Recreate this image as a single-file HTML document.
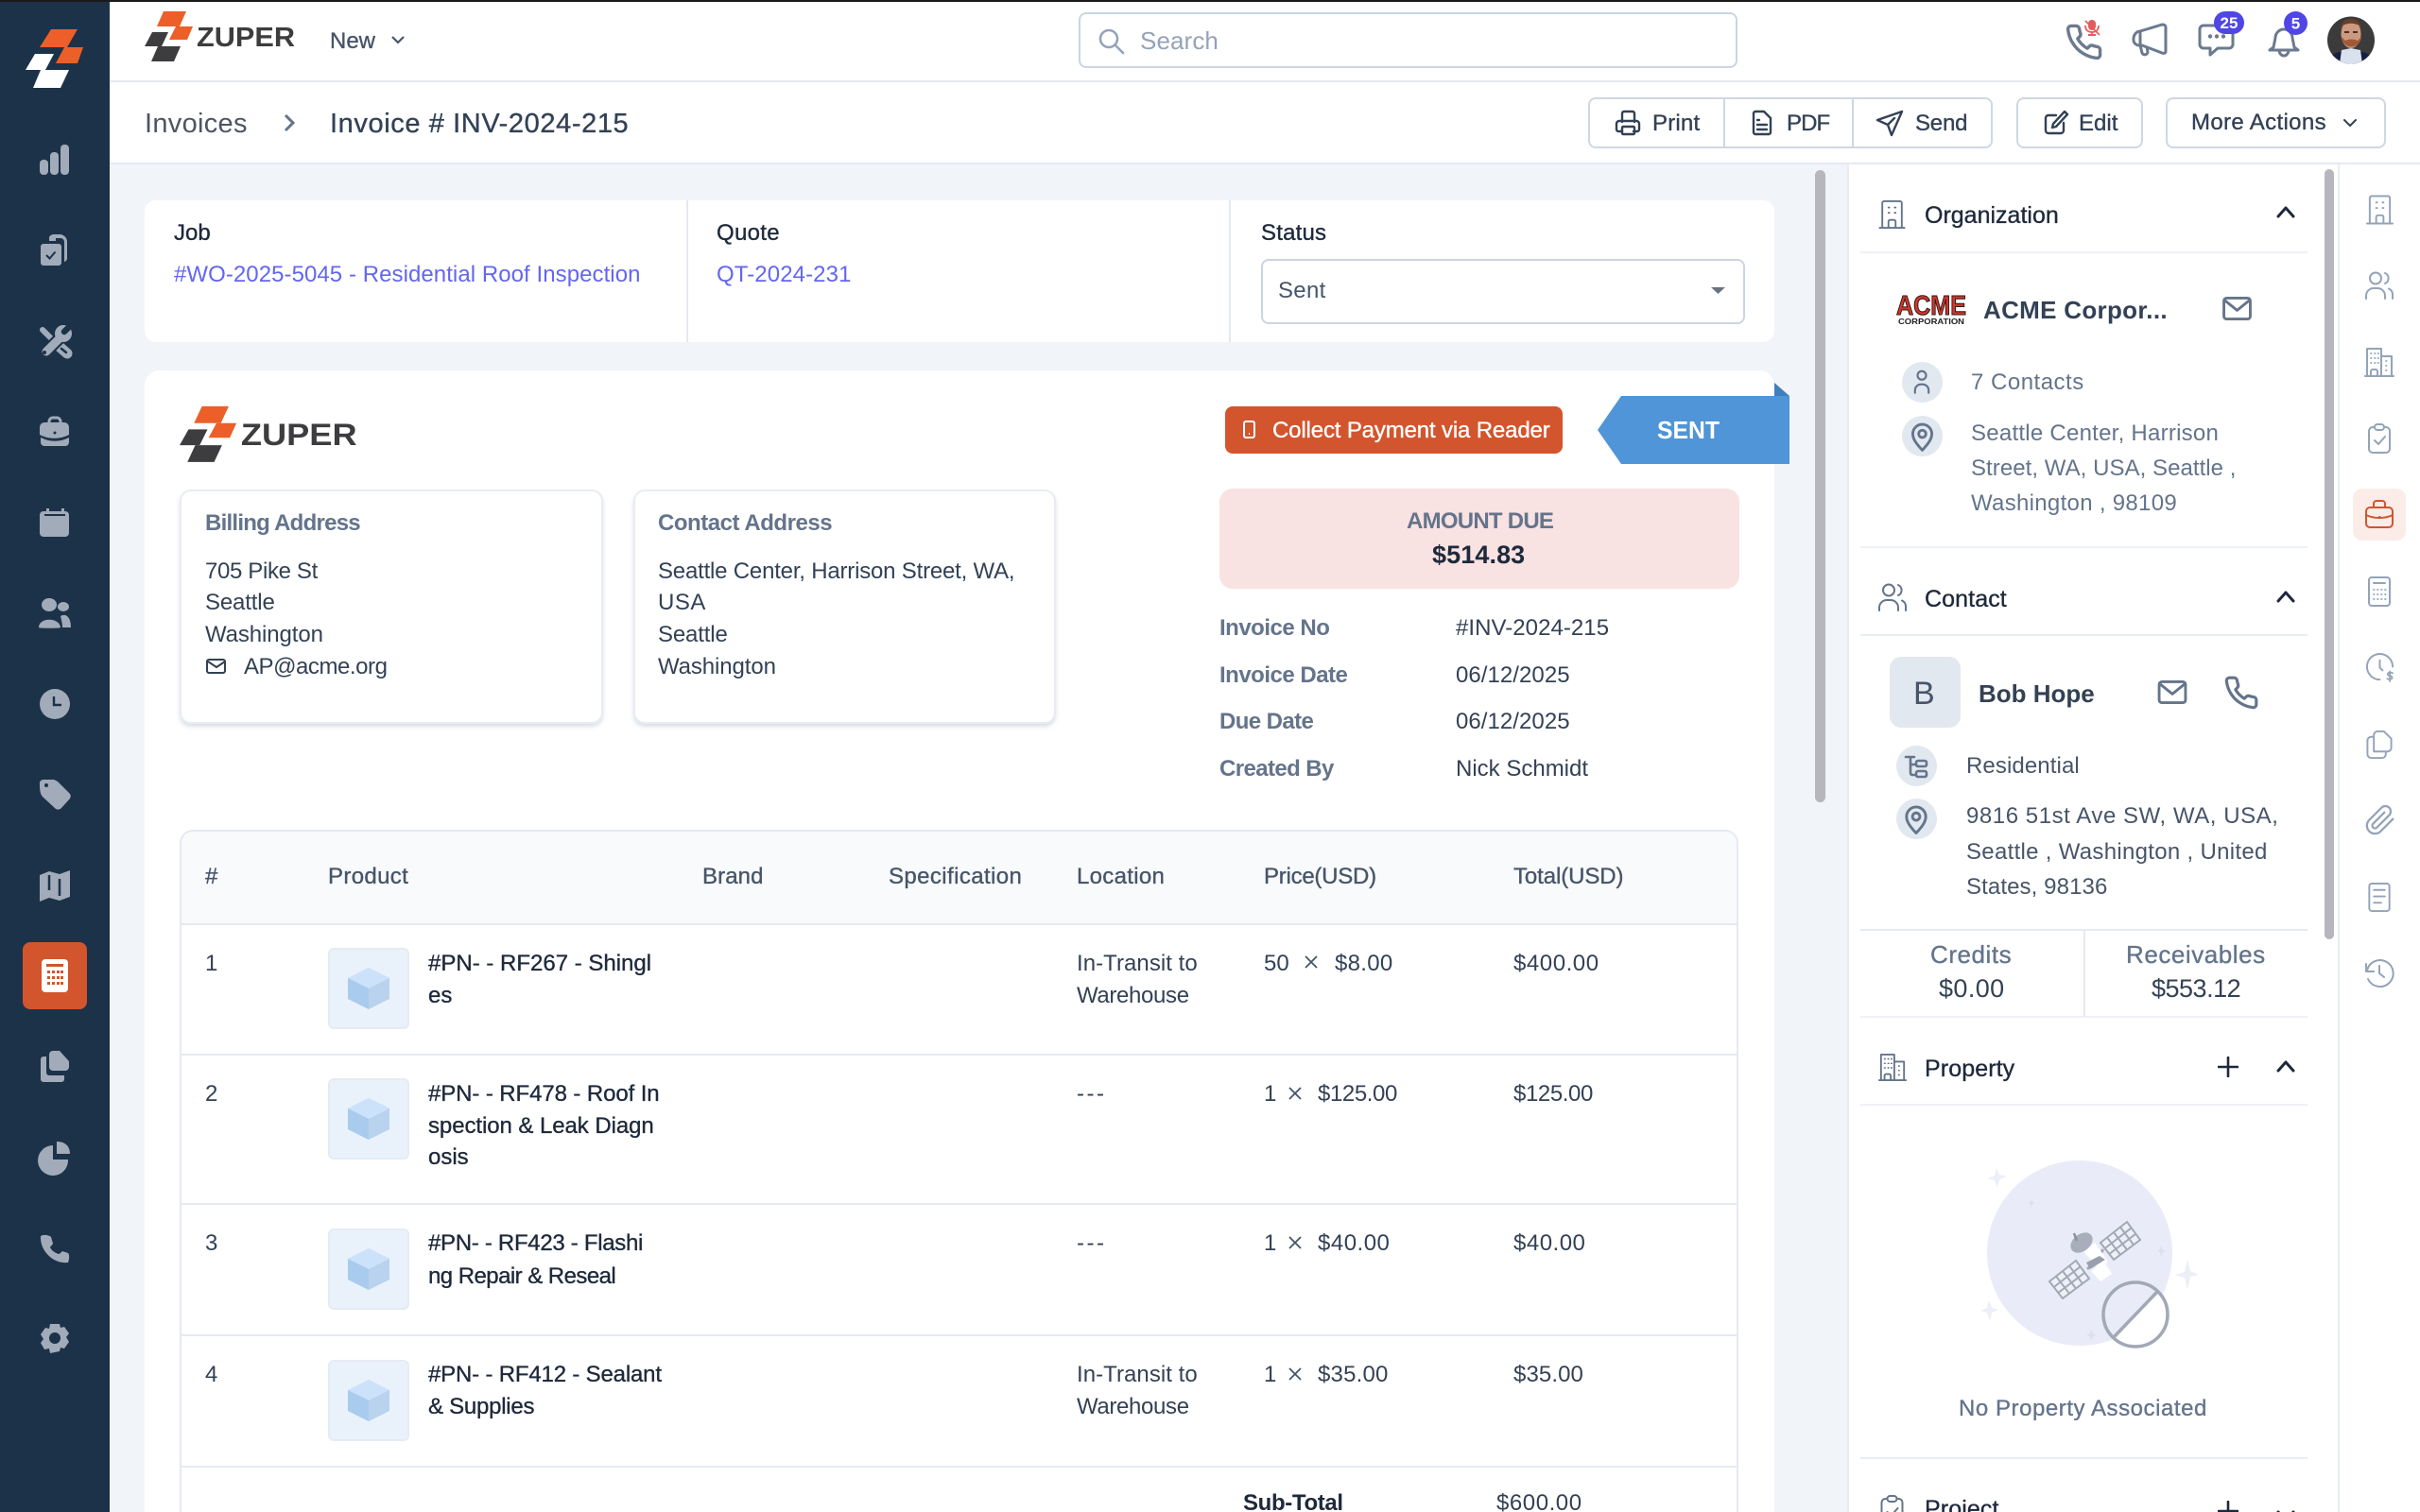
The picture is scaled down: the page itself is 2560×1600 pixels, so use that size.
<!DOCTYPE html>
<html lang="en"><head><meta charset="utf-8"><title>Invoice</title>
<style>
*{box-sizing:border-box}
html,body{margin:0;padding:0;width:2560px;height:1600px;overflow:hidden;background:#f1f4f9;font-family:"Liberation Sans",sans-serif}
#p{position:relative;width:2560px;height:1600px;overflow:hidden;background:#f1f4f9}
.r{position:absolute}
.t{position:absolute;white-space:nowrap;font-size:24px;line-height:34px;height:34px;margin-top:1px;color:#334155;letter-spacing:0}
.m{-webkit-text-stroke:.35px currentColor}
.b{font-weight:700;letter-spacing:-.5px}
.g{color:#64748b}
.d{color:#1e293b}
.l{color:#6366f1}
svg.o{position:absolute;left:0;top:0;z-index:5}
.th{position:absolute;left:347px;width:86px;height:86px;background:#e9f2fb;border:2px solid #e6ebf2;border-radius:6px}
</style></head><body><div id="p">
<div class="r" style="left:0;top:0;width:2560px;height:2px;background:#1a1a1a;z-index:9"></div>
<div class="r" style="left:0;top:0;width:116px;height:1600px;background:#1c3249"></div>
<div class="r" style="left:116px;top:2px;width:2444px;height:171px;background:#fff"></div>
<div class="r" style="left:116px;top:85px;width:2444px;height:2px;background:#e5eaf1"></div>
<div class="r" style="left:116px;top:172px;width:2444px;height:2px;background:#e5eaf1"></div>
<div class="r" style="left:1141px;top:13px;width:697px;height:59px;border:2px solid #cbd5e1;border-radius:8px;background:#fff"></div>
<div class="r" style="left:1680px;top:103px;width:428px;height:54px;border:2px solid #cfd7e2;border-radius:8px"></div>
<div class="r" style="left:1823px;top:103px;width:2px;height:54px;background:#cfd7e2"></div>
<div class="r" style="left:1959px;top:103px;width:2px;height:54px;background:#cfd7e2"></div>
<div class="r" style="left:2133px;top:103px;width:134px;height:54px;border:2px solid #cfd7e2;border-radius:8px"></div>
<div class="r" style="left:2291px;top:103px;width:233px;height:54px;border:2px solid #cfd7e2;border-radius:8px"></div>

<div class="r" style="left:153px;top:212px;width:1724px;height:150px;background:#fff;border-radius:12px"></div>
<div class="r" style="left:726px;top:212px;width:2px;height:150px;background:#e5eaf1"></div>
<div class="r" style="left:1300px;top:212px;width:2px;height:150px;background:#e5eaf1"></div>
<div class="r" style="left:1334px;top:274px;width:512px;height:69px;border:2px solid #cbd5e1;border-radius:8px"></div>

<div class="r" style="left:153px;top:392px;width:1724px;height:1208px;background:#fff;border-radius:16px 16px 0 0"></div>
<div class="r" style="left:1296px;top:430px;width:357px;height:50px;background:#d2552e;border-radius:8px"></div>
<div class="r" style="left:1290px;top:517px;width:550px;height:106px;background:#f8e2e2;border-radius:14px"></div>
<div class="r" style="left:190px;top:518px;width:448px;height:248px;border:2px solid #e8ecf2;border-radius:12px;box-shadow:0 3px 4px rgba(148,163,184,.35)"></div>
<div class="r" style="left:670px;top:518px;width:447px;height:248px;border:2px solid #e8ecf2;border-radius:12px;box-shadow:0 3px 4px rgba(148,163,184,.35)"></div>

<div class="r" style="left:190px;top:878px;width:1649px;height:722px;border:2px solid #e5eaf1;border-bottom:0;border-radius:14px 14px 0 0"></div>
<div class="r" style="left:192px;top:880px;width:1645px;height:97px;background:#f8fafc;border-radius:12px 12px 0 0"></div>
<div class="r" style="left:190px;top:977px;width:1649px;height:2px;background:#e5eaf1"></div>
<div class="r" style="left:190px;top:1115px;width:1649px;height:2px;background:#e5eaf1"></div>
<div class="r" style="left:190px;top:1273px;width:1649px;height:2px;background:#e5eaf1"></div>
<div class="r" style="left:190px;top:1412px;width:1649px;height:2px;background:#e5eaf1"></div>
<div class="r" style="left:190px;top:1551px;width:1649px;height:2px;background:#e5eaf1"></div>
<div class="th" style="top:1003px"></div>
<div class="th" style="top:1141px"></div>
<div class="th" style="top:1300px"></div>
<div class="th" style="top:1439px"></div>

<div class="r" style="left:1920px;top:180px;width:11px;height:669px;background:#b6b6bc;border-radius:6px"></div>

<div class="r" style="left:1954px;top:174px;width:606px;height:1426px;background:#fff"></div>
<div class="r" style="left:1954px;top:174px;width:2px;height:1426px;background:#e8ecf3"></div>
<div class="r" style="left:2473px;top:174px;width:2px;height:1426px;background:#e8ecf3"></div>
<div class="r" style="left:2459px;top:179px;width:10px;height:815px;background:#b6b6bc;border-radius:5px"></div>
<div class="r" style="left:1968px;top:266px;width:473px;height:2px;background:#eef1f6"></div>
<div class="r" style="left:1968px;top:578px;width:473px;height:2px;background:#eef1f6"></div>
<div class="r" style="left:1968px;top:671px;width:473px;height:2px;background:#e8ecf3"></div>
<div class="r" style="left:1968px;top:983px;width:473px;height:2px;background:#e5eaf1"></div>
<div class="r" style="left:1968px;top:1075px;width:473px;height:2px;background:#eef1f6"></div>
<div class="r" style="left:2204px;top:984px;width:2px;height:92px;background:#e5eaf1"></div>
<div class="r" style="left:1968px;top:1168px;width:473px;height:2px;background:#eef1f6"></div>
<div class="r" style="left:1968px;top:1542px;width:473px;height:2px;background:#e8ecf3"></div>
<div class="r" style="left:1999px;top:695px;width:75px;height:75px;background:#e2e8f0;border-radius:12px"></div>
<div class="r" style="left:2012px;top:383px;width:43px;height:43px;background:#e2e8f0;border-radius:50%"></div>
<div class="r" style="left:2012px;top:440px;width:43px;height:43px;background:#e2e8f0;border-radius:50%"></div>
<div class="r" style="left:2006px;top:789px;width:43px;height:43px;background:#e2e8f0;border-radius:50%"></div>
<div class="r" style="left:2006px;top:845px;width:43px;height:43px;background:#e2e8f0;border-radius:50%"></div>
<div class="r" style="left:2489px;top:517px;width:56px;height:55px;background:#fbece8;border-radius:10px"></div>

<!-- top bar text -->
<div class="t m" style="left:349px;top:26px;color:#475569">New</div>
<div class="t" style="left:1206px;top:25px;font-size:26px;color:#94a3b8;letter-spacing:.1px">Search</div>
<div class="t" style="left:153px;top:113px;font-size:29px;color:#4b5563;letter-spacing:.3px">Invoices</div>
<div class="t m" style="left:349px;top:113px;font-size:29px;color:#334155;letter-spacing:.6px">Invoice # INV-2024-215</div>
<div class="t m" style="left:1748px;top:113px;letter-spacing:.2px">Print</div>
<div class="t m" style="left:1890px;top:113px;letter-spacing:-.9px">PDF</div>
<div class="t m" style="left:2026px;top:113px;letter-spacing:-.2px">Send</div>
<div class="t m" style="left:2199px;top:113px">Edit</div>
<div class="t m" style="left:2318px;top:112px;letter-spacing:.35px">More Actions</div>

<!-- job card -->
<div class="t m d" style="left:184px;top:229px">Job</div>
<div class="t l" style="left:184px;top:273px;letter-spacing:.06px">#WO-2025-5045 - Residential Roof Inspection</div>
<div class="t m d" style="left:758px;top:229px;letter-spacing:.3px">Quote</div>
<div class="t l" style="left:758px;top:273px;letter-spacing:.1px">QT-2024-231</div>
<div class="t m d" style="left:1334px;top:229px;letter-spacing:.2px">Status</div>
<div class="t" style="left:1352px;top:290px;color:#475569;letter-spacing:.3px">Sent</div>

<!-- invoice head -->
<div class="t m" style="left:1346px;top:438px;color:#fff;letter-spacing:-.15px">Collect Payment via Reader</div>
<div class="t b" style="left:1753px;top:438px;color:transparent;font-size:26px;width:0;overflow:hidden"></div>
<div class="t b g" style="left:1488px;top:534px;letter-spacing:-.75px">AMOUNT DUE</div>
<div class="t b d" style="left:1515px;top:569px;font-size:27px;letter-spacing:.1px">$514.83</div>
<div class="t b g" style="left:1290px;top:647px">Invoice No</div>
<div class="t" style="left:1540px;top:647px;letter-spacing:.05px">#INV-2024-215</div>
<div class="t b g" style="left:1290px;top:697px">Invoice Date</div>
<div class="t" style="left:1540px;top:697px;letter-spacing:.05px">06/12/2025</div>
<div class="t b g" style="left:1290px;top:746px;letter-spacing:-.6px">Due Date</div>
<div class="t" style="left:1540px;top:746px;letter-spacing:.05px">06/12/2025</div>
<div class="t b g" style="left:1290px;top:796px;letter-spacing:-.6px">Created By</div>
<div class="t" style="left:1540px;top:796px">Nick Schmidt</div>

<!-- addresses -->
<div class="t b g" style="left:217px;top:536px;letter-spacing:-.75px">Billing Address</div>
<div class="t" style="left:217px;top:587px;letter-spacing:-.35px">705 Pike St</div>
<div class="t" style="left:217px;top:620px;letter-spacing:-.15px">Seattle</div>
<div class="t" style="left:217px;top:654px;letter-spacing:-.1px">Washington</div>
<div class="t" style="left:258px;top:688px;letter-spacing:-.45px">AP@acme.org</div>
<div class="t b g" style="left:696px;top:536px;letter-spacing:-.47px">Contact Address</div>
<div class="t" style="left:696px;top:587px;letter-spacing:-.2px">Seattle Center, Harrison Street, WA,</div>
<div class="t" style="left:696px;top:620px;letter-spacing:.5px">USA</div>
<div class="t" style="left:696px;top:654px;letter-spacing:-.15px">Seattle</div>
<div class="t" style="left:696px;top:688px;letter-spacing:-.1px">Washington</div>

<!-- table head -->
<div class="t m" style="left:217px;top:910px;color:#475569">#</div>
<div class="t m" style="left:347px;top:910px;color:#475569;letter-spacing:.35px">Product</div>
<div class="t m" style="left:743px;top:910px;color:#475569;letter-spacing:.1px">Brand</div>
<div class="t m" style="left:940px;top:910px;color:#475569;letter-spacing:.4px">Specification</div>
<div class="t m" style="left:1139px;top:910px;color:#475569;letter-spacing:.3px">Location</div>
<div class="t m" style="left:1337px;top:910px;color:#475569;letter-spacing:-.25px">Price(USD)</div>
<div class="t m" style="left:1601px;top:910px;color:#475569;letter-spacing:-.1px">Total(USD)</div>

<!-- row 1 -->
<div class="t" style="left:217px;top:1002px">1</div>
<div class="t m d" style="left:453px;top:1002px">#PN- - RF267 - Shingl</div>
<div class="t m d" style="left:453px;top:1036px">es</div>
<div class="t" style="left:1139px;top:1002px;letter-spacing:.05px">In-Transit to</div>
<div class="t" style="left:1139px;top:1036px;letter-spacing:-.35px">Warehouse</div>
<div class="t" style="left:1337px;top:1002px">50</div>
<div class="t" style="left:1412px;top:1002px;letter-spacing:.3px">$8.00</div>
<div class="t" style="left:1601px;top:1002px;letter-spacing:.55px">$400.00</div>
<!-- row 2 -->
<div class="t" style="left:217px;top:1140px">2</div>
<div class="t m d" style="left:453px;top:1140px;letter-spacing:-.1px">#PN- - RF478 - Roof In</div>
<div class="t m d" style="left:453px;top:1174px;letter-spacing:-.07px">spection &amp; Leak Diagn</div>
<div class="t m d" style="left:453px;top:1207px">osis</div>
<div class="t" style="left:1139px;top:1140px;letter-spacing:2.500px">---</div>
<div class="t" style="left:1337px;top:1140px">1</div>
<div class="t" style="left:1394px;top:1140px;letter-spacing:-.4px">$125.00</div>
<div class="t" style="left:1601px;top:1140px;letter-spacing:-.4px">$125.00</div>
<!-- row 3 -->
<div class="t" style="left:217px;top:1298px">3</div>
<div class="t m d" style="left:453px;top:1298px;letter-spacing:-.3px">#PN- - RF423 - Flashi</div>
<div class="t m d" style="left:453px;top:1333px;letter-spacing:-.55px">ng Repair &amp; Reseal</div>
<div class="t" style="left:1139px;top:1298px;letter-spacing:2.500px">---</div>
<div class="t" style="left:1337px;top:1298px">1</div>
<div class="t" style="left:1394px;top:1298px;letter-spacing:.5px">$40.00</div>
<div class="t" style="left:1601px;top:1298px;letter-spacing:.5px">$40.00</div>
<!-- row 4 -->
<div class="t" style="left:217px;top:1437px">4</div>
<div class="t m d" style="left:453px;top:1437px;letter-spacing:-.18px">#PN- - RF412 - Sealant</div>
<div class="t m d" style="left:453px;top:1471px;letter-spacing:-.25px">&amp; Supplies</div>
<div class="t" style="left:1139px;top:1437px;letter-spacing:.05px">In-Transit to</div>
<div class="t" style="left:1139px;top:1471px;letter-spacing:-.35px">Warehouse</div>
<div class="t" style="left:1337px;top:1437px">1</div>
<div class="t" style="left:1394px;top:1437px;letter-spacing:.2px">$35.00</div>
<div class="t" style="left:1601px;top:1437px;letter-spacing:.1px">$35.00</div>
<div class="t b d" style="left:1315px;top:1573px;letter-spacing:-.35px">Sub-Total</div>
<div class="t" style="left:1583px;top:1573px;letter-spacing:.55px">$600.00</div>

<!-- right panel text -->
<div class="t m d" style="left:2036px;top:210px;font-size:25px">Organization</div>
<div class="t b" style="left:2098px;top:310px;font-size:26px;letter-spacing:.3px">ACME Corpor...</div>
<div class="t g" style="left:2085px;top:387px;letter-spacing:.5px">7 Contacts</div>
<div class="t g" style="left:2085px;top:441px;letter-spacing:.25px">Seattle Center, Harrison</div>
<div class="t g" style="left:2085px;top:478px;letter-spacing:.05px">Street, WA, USA, Seattle ,</div>
<div class="t g" style="left:2085px;top:515px;letter-spacing:.3px">Washington , 98109</div>
<div class="t m d" style="left:2036px;top:616px;font-size:25px;letter-spacing:.1px">Contact</div>
<div class="t" style="left:2024px;top:716px;font-size:34px;color:#475569">B</div>
<div class="t b" style="left:2093px;top:716px;font-size:26px;letter-spacing:0">Bob Hope</div>
<div class="t" style="left:2080px;top:793px;color:#475569;letter-spacing:.1px">Residential</div>
<div class="t" style="left:2080px;top:846px;color:#475569;letter-spacing:.55px">9816 51st Ave SW, WA, USA,</div>
<div class="t" style="left:2080px;top:884px;color:#475569;letter-spacing:.3px">Seattle , Washington , United</div>
<div class="t" style="left:2080px;top:921px;color:#475569;letter-spacing:.1px">States, 98136</div>
<div class="t m g" style="left:2042px;top:992px;font-size:26px;letter-spacing:.55px">Credits</div>
<div class="t" style="left:2051px;top:1028px;font-size:27px;letter-spacing:.4px">$0.00</div>
<div class="t m g" style="left:2249px;top:992px;font-size:26px;letter-spacing:.55px">Receivables</div>
<div class="t" style="left:2276px;top:1028px;font-size:27px;letter-spacing:-.5px">$553.12</div>
<div class="t m d" style="left:2036px;top:1113px;font-size:25px;letter-spacing:.1px">Property</div>
<div class="t m g" style="left:2072px;top:1473px;letter-spacing:.55px">No Property Associated</div>
<div class="t m d" style="left:2036px;top:1579px;font-size:25px;letter-spacing:.1px">Project</div>

<svg class="o" width="2560" height="1600" viewBox="0 0 2560 1600" xmlns="http://www.w3.org/2000/svg" font-family="Liberation Sans, sans-serif">
<defs>
<symbol id="bld" viewBox="0 0 30 32"><g fill="none" stroke="currentColor" stroke-width="2" stroke-linecap="round" stroke-linejoin="round"><path d="M1 31h28M4 31V3a2 2 0 0 1 2-2h18a2 2 0 0 1 2 2v28M11 31v-7a2 2 0 0 1 2-2h4a2 2 0 0 1 2 2v7M11 8h1M18 8h1M11 14h1M18 14h1"/></g></symbol>
<symbol id="users" viewBox="0 0 30 30"><g fill="none" stroke="currentColor" stroke-width="2" stroke-linecap="round"><circle cx="11" cy="7.500" r="6"/><path d="M1 29v-3a8 8 0 0 1 8-8h4a8 8 0 0 1 8 8v3M21 2a6 6 0 0 1 0 11M25 18.500a7 7 0 0 1 4 6.500v4"/></g></symbol>
<symbol id="blds" viewBox="0 0 32 32"><g fill="none" stroke="currentColor" stroke-width="2" stroke-linecap="round" stroke-linejoin="round"><path d="M1 31h30M3 31V2h15v29M18 10h11v21M7 31v-5a2 2 0 0 1 2-2h3a2 2 0 0 1 2 2v5"/><path stroke-width="1.700" d="M7 7h.6M11 7h.6M14.500 7h.6M7 12h.6M11 12h.6M14.500 12h.6M7 17h.6M11 17h.6M14.500 17h.6M23 15h.6M23 20h.6M23 25h.6"/></g></symbol>
<symbol id="clip" viewBox="0 0 24 32"><g fill="none" stroke="currentColor" stroke-width="2" stroke-linecap="round" stroke-linejoin="round"><rect x="1" y="4" width="22" height="27" rx="4"/><rect x="7" y="1" width="10" height="6" rx="3" fill="#fff"/><path d="M7 18l4 4 7-8"/></g></symbol>
<symbol id="brief" viewBox="0 0 30 30"><g fill="none" stroke="currentColor" stroke-width="2" stroke-linecap="round" stroke-linejoin="round"><rect x="1" y="8" width="28" height="21" rx="4"/><path d="M9 8V4a3 3 0 0 1 3-3h6a3 3 0 0 1 3 3v4M1 16c8 4 20 4 28 0M15 18h.5"/></g></symbol>
<symbol id="calc" viewBox="0 0 24 32"><g fill="none" stroke="currentColor" stroke-width="2" stroke-linecap="round"><rect x="1" y="1" width="22" height="30" rx="3"/><path d="M6 7h12"/><path stroke-width="1.800" d="M6 14h.6M10 14h.6M14 14h.6M18 14h.6M6 19h.6M10 19h.6M14 19h.6M18 19h.6M6 24h.6M10 24h.6M14 24h.6M18 24h.6"/></g></symbol>
<symbol id="clkd" viewBox="0 0 30 34"><g fill="none" stroke="currentColor" stroke-width="2" stroke-linecap="round"><path d="M29 15A14 14 0 1 0 15 29M15 8v8l3 3"/><path stroke-width="1.800" d="M29 22c-1-1-4-1-5 0s0 3 2 3 3 2 2 3-4 1-5 0M26 20v11"/></g></symbol>
<symbol id="copy" viewBox="0 0 28 32"><g fill="none" stroke="currentColor" stroke-width="2" stroke-linejoin="round"><path d="M8 24V6a4 4 0 0 1 4-4h7l8 8v10a4 4 0 0 1-4 4z"/><path d="M8 8H5a4 4 0 0 0-4 4v15a4 4 0 0 0 4 4h12a4 4 0 0 0 4-4v-3"/></g></symbol>
<symbol id="pc" viewBox="0 0 24 24"><path fill="none" stroke="currentColor" stroke-width="1.600" stroke-linecap="round" stroke-linejoin="round" d="M21.440 11.050l-9.190 9.190a6 6 0 0 1-8.490-8.490l9.190-9.190a4 4 0 0 1 5.660 5.660l-9.200 9.190a2 2 0 0 1-2.830-2.830l8.490-8.480"/></symbol>
<symbol id="doc" viewBox="0 0 24 32"><g fill="none" stroke="currentColor" stroke-width="2" stroke-linecap="round"><rect x="1" y="1" width="22" height="30" rx="3"/><path d="M6 8h12M6 15h12M6 22h8"/></g></symbol>
<symbol id="hist" viewBox="0 0 32 32"><g fill="none" stroke="currentColor" stroke-width="2" stroke-linecap="round" stroke-linejoin="round"><path d="M4 22a14 14 0 1 0-1-9M2 6v8h8M16 8v8l5 4"/></g></symbol>
<symbol id="mail" viewBox="0 0 32 26"><g fill="none" stroke="#64748b" stroke-width="3" stroke-linejoin="round" stroke-linecap="round"><rect x="1.500" y="1.500" width="29" height="23" rx="3"/><path d="M2.500 4L16 15 29.500 4"/></g></symbol>
<symbol id="ph" viewBox="0 0 24 24"><path fill="none" stroke="currentColor" stroke-width="2" stroke-linecap="round" stroke-linejoin="round" d="M22 16.920v3a2 2 0 0 1-2.180 2 19.790 19.790 0 0 1-8.630-3.070 19.500 19.500 0 0 1-6-6 19.790 19.790 0 0 1-3.070-8.670A2 2 0 0 1 4.110 2h3a2 2 0 0 1 2 1.720 12.840 12.840 0 0 0 .7 2.810 2 2 0 0 1-.45 2.110L8.090 9.910a16 16 0 0 0 6 6l1.270-1.270a2 2 0 0 1 2.110-.45 12.840 12.840 0 0 0 2.810.7A2 2 0 0 1 22 16.920z"/></symbol>
<symbol id="pin" viewBox="0 0 24 32"><g fill="none" stroke="#64748b" stroke-width="3" stroke-linejoin="round"><path d="M12 30.500C5 23 1.500 18 1.500 12.500a10.500 10.500 0 0 1 21 0C22.500 18 19 23 12 30.500z"/><circle cx="12" cy="12.500" r="4"/></g></symbol>
<symbol id="per" viewBox="0 0 20 28"><g fill="none" stroke="#64748b" stroke-width="2.400" stroke-linecap="round"><circle cx="10" cy="6.500" r="5"/><path d="M2 27v-3a7 7 0 0 1 7-7h2a7 7 0 0 1 7 7v3"/></g></symbol>
<symbol id="chu" viewBox="0 0 20 14"><path fill="none" stroke="#1e293b" stroke-width="3" stroke-linecap="round" stroke-linejoin="round" d="M2 12l8-9 8 9"/></symbol>
<symbol id="plus" viewBox="0 0 22 22"><path fill="none" stroke="#1e293b" stroke-width="2.600" stroke-linecap="round" d="M11 1v20M1 11h20"/></symbol>
<g id="cube"><polygon points="0,-22 22,-11 22,11 0,22 -22,11 -22,-11" fill="#b9d2ee"/><polygon points="0,-22 22,-11 0,0 -22,-11" fill="#cce2fa"/><polygon points="-22,-11 0,0 0,22 -22,11" fill="#a9cbed"/></g>
<g id="panel" fill="#eef0f8" stroke="#a3a8b6" stroke-width="2"><polygon points="2250,1293 2264,1312 2236,1333 2222,1315"/><path fill="none" d="M2254.700 1299.300L2226.700 1321M2259.300 1305.700L2231.300 1327M2243 1298.500L2257 1317.300M2236 1304L2250 1322.500M2229 1309.500L2243 1327.800"/></g>
<g id="logo"><polygon points="173,12 197,12 190,28 166,28" fill="#ec5f29"/><polygon points="186,28 204,28 198,42 179,42" fill="#ec5f29"/><polygon points="161,34 178,34 171,49 153,49" fill="#3d3d3f"/><polygon points="167,49 191,49 184,65 160,65" fill="#3d3d3f"/><text x="208" y="49" font-size="29" font-weight="700" fill="#3d3d3f" textLength="104" lengthAdjust="spacingAndGlyphs">ZUPER</text></g>
</defs>

<!-- sidebar logo -->
<polygon points="54,31 82,31 71,50 42,50" fill="#ec5f29"/><polygon points="68,50 88,50 82,67 59,67" fill="#ec5f29"/><polygon points="37,57 57,57 48,74 27,74" fill="#fff"/><polygon points="43,74 73,74 64,93 35,93" fill="#fff"/>
<!-- sidebar icons -->
<g fill="#a1abb9" stroke="none">
<rect x="42" y="169" width="9" height="16" rx="4"/><rect x="53" y="161" width="9" height="24" rx="4"/><rect x="64" y="153" width="9" height="32" rx="4"/>
<path d="M52 251c1-2 3-3 5-3h6a8 8 0 0 1 8 8v17a4 4 0 0 1-3 4V256a4 4 0 0 0-4-4h-5v3h-7z"/><rect x="43" y="258" width="22" height="23" rx="3"/><path d="M49 270l3.500 3.500 6-7" fill="none" stroke="#1c3249" stroke-width="2"/>
<path d="M45 349l9 9" stroke="#a1abb9" stroke-width="6" stroke-linecap="round"/>
<path d="M63 367l8 7" stroke="#a1abb9" stroke-width="11" stroke-linecap="round"/>
<path d="M65 369l5 4" stroke="#1c3249" stroke-width="2.500" stroke-linecap="round"/>
<path d="M49 372l17-17" stroke="#1c3249" stroke-width="13" stroke-linecap="round"/>
<path d="M49 372l17-17" stroke="#a1abb9" stroke-width="9" stroke-linecap="round"/>
<circle cx="67" cy="353" r="9"/>
<path d="M68 351l8-8" stroke="#1c3249" stroke-width="6.500" stroke-linecap="round"/>
<circle cx="47" cy="373" r="2" fill="#1c3249"/>
<path d="M52 449v-3a4 4 0 0 1 4-4h4a4 4 0 0 1 4 4v3" fill="none" stroke="#a1abb9" stroke-width="3"/>
<path d="M48 447h20a5 5 0 0 1 5 5v8c-9 5-22 5-31 0v-8a5 5 0 0 1 5-5z"/><circle cx="58" cy="458" r="1.500" fill="#1c3249"/><path d="M43 463c10 5 20 5 30 0v5a4 4 0 0 1-4 4H47a4 4 0 0 1-4-4z"/>
<path d="M49 538h3v3h13v-3h3v3h1a4 4 0 0 1 4 4v19a4 4 0 0 1-4 4H46a4 4 0 0 1-4-4v-19a4 4 0 0 1 4-4h3z"/><rect x="47" y="544" width="22" height="2" fill="#1c3249"/>
<ellipse cx="52" cy="640" rx="8" ry="7"/><path d="M41 664c0-11 22-11 23 0 0 1-23 1-23 0z"/><ellipse cx="67" cy="642" rx="6" ry="5"/><path d="M64 652c5-3 11 0 11 12h-9c0-4-1-8-2-12z"/>
<circle cx="58" cy="745" r="16"/><path d="M57 737v9h8" fill="none" stroke="#1c3249" stroke-width="2.400"/>
<path d="M42 830a4 4 0 0 1 4-5h10c2 0 3 1 5 2l13 13c1 2 1 3 0 5l-9 10c-2 2-4 2-6 1L46 844c-2-2-4-4-4-14z"/><circle cx="49" cy="831" r="2" fill="#1c3249"/>
<path d="M42 926l10-4 11 3 11-4v28l-11 4-11-3-10 4z"/><path d="M52 926v16M63 930v18" stroke="#1c3249" stroke-width="2.500"/>
<path d="M56 1112h7l10 11v6a4 4 0 0 1-4 4H56a4 4 0 0 1-4-4v-13a4 4 0 0 1 4-4z"/><path d="M43 1119a3 3 0 0 1 3-3h3v17a3 3 0 0 0 3 3h16v4a3 3 0 0 1-3 3H46a3 3 0 0 1-3-3z" transform="translate(0,2)"/>
<path d="M56 1212a16 16 0 1 0 16 15H56z"/><path d="M60 1208c9 0 14 5 14 13H60z"/>
<path d="M43 1308c3-2 9-1 11 1l2 7c-1 2-3 3-3 4 2 4 6 6 9 7 1 0 3-2 4-3l6 2c2 2 1 8 0 10-14 2-30-11-29-28z"/>
<path d="M53 1401h10l1 4 4-1 5 7-3 4 3 5-5 7-4-1-1 4-10 2-1-5-5 1-4-7 3-4-3-5 5-7 4 1z"/><circle cx="58" cy="1416" r="6" fill="#1c3249"/>
</g>
<rect x="24" y="997" width="68" height="71" rx="8" fill="#d2552e"/>
<rect x="44" y="1015" width="28" height="35" rx="4" fill="#fff"/><rect x="49" y="1020" width="18" height="3" fill="#d2552e"/>
<g fill="#d2552e"><rect x="50" y="1027" width="3" height="3"/><rect x="55" y="1027" width="3" height="3"/><rect x="60" y="1027" width="3" height="3"/><rect x="64" y="1027" width="3" height="3"/><rect x="50" y="1033" width="3" height="3"/><rect x="55" y="1033" width="3" height="3"/><rect x="60" y="1033" width="3" height="3"/><rect x="64" y="1033" width="3" height="3"/><rect x="50" y="1039" width="3" height="3"/><rect x="55" y="1039" width="3" height="3"/><rect x="60" y="1039" width="3" height="3"/><rect x="64" y="1039" width="3" height="3"/></g>

<!-- logos -->
<use href="#logo"/>
<g transform="translate(190,430) scale(1.18,1.11) translate(-153,-12)"><use href="#logo"/></g>
<path d="M415 39l6 6 6-6" fill="none" stroke="#475569" stroke-width="2.200"/>
<path d="M302 122l8 8-8 8" fill="none" stroke="#64748b" stroke-width="3"/>

<!-- search -->
<g fill="none" stroke="#94a3b8" stroke-width="2.600" stroke-linecap="round"><circle cx="1173" cy="41" r="9"/><path d="M1180 48l8 8"/></g>
<!-- top right -->
<g color="#6b7a8f"><use href="#ph" x="2184" y="24" width="41" height="41"/></g>
<g fill="#e25c5c"><rect x="2209" y="21" width="8" height="11" rx="4"/><path d="M2206 27c0 5 3 7 7 7s7-2 7-7" fill="none" stroke="#e25c5c" stroke-width="1.800"/><rect x="2209" y="36" width="8" height="2"/><path d="M2213 34v3M2206 22l15 15" stroke="#e25c5c" stroke-width="1.600"/></g>
<g fill="none" stroke="#6b7a8f" stroke-width="3" stroke-linejoin="round" stroke-linecap="round"><path d="M2264 33l23-7c3 0 4 1 4 3v25c0 2-1 3-4 2l-21-8h-4a6 6 0 0 1-5-7c0-4 3-8 7-8z"/><path d="M2264 34v14M2264 48l2 8c1 3 6 2 6-1l-1-5"/></g>
<g fill="none" stroke="#6b7a8f" stroke-width="3" stroke-linejoin="round"><path d="M2331 27h27a4 4 0 0 1 4 4v16a4 4 0 0 1-4 4h-12l-8 7v-7h-7a4 4 0 0 1-4-4V31a4 4 0 0 1 4-4z"/></g>
<g fill="#6b7a8f"><circle cx="2338" cy="38.500" r="2.200"/><circle cx="2345" cy="38.500" r="2.200"/><circle cx="2352" cy="38.500" r="2.200"/></g>
<g fill="none" stroke="#6b7a8f" stroke-width="3" stroke-linejoin="round" stroke-linecap="round"><path d="M2407 40a9 9 0 0 1 18 0l2 10 4 3h-30l4-3z"/><path d="M2411 53a5 6 0 0 0 10 0"/></g>
<rect x="2342" y="12" width="32" height="24" rx="12" fill="#4f46e5"/><text x="2358" y="30" font-size="17" font-weight="700" fill="#fff" text-anchor="middle">25</text>
<rect x="2416" y="12" width="25" height="25" rx="12.500" fill="#4f46e5"/><text x="2428.500" y="30.500" font-size="17" font-weight="700" fill="#fff" text-anchor="middle">5</text>
<clipPath id="av"><circle cx="2487" cy="42.500" r="25"/></clipPath>
<g clip-path="url(#av)"><rect x="2460" y="15" width="54" height="54" fill="#3b3b3b"/><path d="M2462 70c1-12 8-16 25-16s24 4 25 16z" fill="#172043"/><path d="M2477 53l10-2 10 2 2 15h-24z" fill="#d9e1ee"/><ellipse cx="2487" cy="36" rx="10.500" ry="15" fill="#cc9a82"/><path d="M2476 32c-1-16 22-16 22 0l-2-5c-6-3-12-3-18 0z" fill="#6b3f28"/><path d="M2477 39c1 14 20 14 21 0l-4 4c-4-2-9-2-13 0z" fill="#a05a36"/><rect x="2480" y="33" width="5" height="2" fill="#4a3024"/><rect x="2489" y="33" width="5" height="2" fill="#4a3024"/></g>

<!-- toolbar icons -->
<g fill="none" stroke="#334155" stroke-width="2.400" stroke-linejoin="round" stroke-linecap="round">
<path d="M1716 129v-9a2 2 0 0 1 2-2h9a2 2 0 0 1 2 2v9M1716 139h-4a2 2 0 0 1-2-2v-6a3 3 0 0 1 3-3h18a3 3 0 0 1 3 3v6a2 2 0 0 1-2 2h-4"/><rect x="1716" y="134" width="13" height="8" rx="1"/>
<path d="M1857 118h9l7 7v15a2 2 0 0 1-2 2h-14a2 2 0 0 1-2-2v-20a2 2 0 0 1 2-2zM1859 127h2M1859 132h10M1859 137h10"/>
<path d="M2012 118l-26 9 11 5 4 11zM1997 132l7-7"/>
<path d="M2175 122h-8a3 3 0 0 0-3 3v13a3 3 0 0 0 3 3h13a3 3 0 0 0 3-3v-8M2172 131l12-13 3 3-12 13-4 1z"/>
<path d="M2480 127l6 6 6-6" stroke-width="2"/>
</g>

<!-- select caret -->
<polygon points="1810,304 1825,304 1817.500,311" fill="#6b7280"/>
<!-- collect icon -->
<rect x="1316" y="446" width="11" height="17" rx="2" fill="none" stroke="#fff" stroke-width="2"/><path d="M1321 459h1" stroke="#fff" stroke-width="2"/>
<!-- sent ribbon -->
<polygon points="1877,405 1893,419 1877,419" fill="#3f7fbd"/>
<polygon points="1690,455 1715,419 1893,419 1893,491 1715,491" fill="#5095d7"/>
<text x="1753" y="464" font-size="26" font-weight="700" fill="#fff" textLength="66" lengthAdjust="spacingAndGlyphs">SENT</text>
<!-- email icon -->
<g fill="none" stroke="#334155" stroke-width="2"><rect x="219" y="698" width="19" height="14" rx="2"/><path d="M220 700l9 6 9-6"/></g>
<!-- thumbs -->
<use href="#cube" transform="translate(390,1046)"/><use href="#cube" transform="translate(390,1184)"/><use href="#cube" transform="translate(390,1343)"/><use href="#cube" transform="translate(390,1482)"/>
<!-- x marks -->
<g stroke="#475569" stroke-width="1.800" fill="none"><path d="M1381 1012l12 12M1393 1012l-12 12"/><path d="M1364 1151l12 12M1376 1151l-12 12"/><path d="M1364 1309l12 12M1376 1309l-12 12"/><path d="M1364 1448l12 12M1376 1448l-12 12"/></g>

<!-- right panel heads -->
<g color="#64748b"><use href="#bld" x="1987" y="212" width="29" height="30"/><use href="#users" x="1987" y="617" width="30" height="30"/><use href="#blds" x="1986" y="1114" width="32" height="30"/><use href="#clip" x="1989" y="1582" width="25" height="32"/></g>
<use href="#chu" x="2408" y="217" width="20" height="14"/><use href="#chu" x="2408" y="624" width="20" height="14"/><use href="#chu" x="2408" y="1121" width="20" height="14"/>
<use href="#plus" x="2346" y="1118" width="22" height="22"/><use href="#plus" x="2346" y="1588" width="22" height="22"/>
<g transform="translate(2408,1612) scale(1,-1)"><use href="#chu" width="20" height="14"/></g>
<!-- acme -->
<text x="2006" y="333" font-size="29" font-weight="700" fill="#d5352a" stroke="#2a1a18" stroke-width="1.100" textLength="74" lengthAdjust="spacingAndGlyphs">ACME</text>
<text x="2008" y="343" font-size="8.500" font-weight="700" fill="#222" textLength="70" lengthAdjust="spacingAndGlyphs">CORPORATION</text>
<use href="#mail" x="2351" y="314" width="31" height="25"/>
<use href="#per" x="2024" y="391" width="18" height="26"/>
<use href="#pin" x="2022" y="447" width="23" height="31"/>
<use href="#mail" x="2282" y="720" width="32" height="25"/>
<g color="#64748b"><use href="#ph" x="2352" y="714" width="38" height="38"/></g>
<g fill="none" stroke="#64748b" stroke-width="2.600" stroke-linejoin="round" stroke-linecap="round"><path d="M2016 801h9M2021 801v17a2 2 0 0 0 2 2h4M2021 809h6"/><rect x="2027" y="805" width="11" height="6" rx="2"/><rect x="2027" y="816" width="11" height="6" rx="2"/></g>
<use href="#pin" x="2015" y="852" width="24" height="31"/>

<!-- rail -->
<g color="#94a3b8">
<use href="#bld" x="2503" y="206" width="29" height="32"/>
<use href="#users" x="2502" y="287" width="30" height="30"/>
<use href="#blds" x="2501" y="367" width="32" height="32"/>
<use href="#clip" x="2505" y="448" width="24" height="32"/>
<use href="#calc" x="2505" y="610" width="24" height="32"/>
<use href="#clkd" x="2502" y="691" width="31" height="33"/>
<use href="#copy" x="2503" y="772" width="28" height="31"/>
<use href="#pc" x="2501" y="851" width="34" height="34"/>
<use href="#doc" x="2505" y="934" width="24" height="31"/>
<use href="#hist" x="2501" y="1014" width="32" height="32"/>
</g>
<g color="#d2552e"><use href="#brief" x="2502" y="528" width="30" height="32"/></g>

<!-- illustration -->
<circle cx="2200" cy="1326" r="98" fill="#e9ecf8"/>
<g fill="#eceef8"><path d="M2112 1236l3 7 7 2-7 3-2 9-3-8-7-2 7-3z"/><path d="M2314 1333l3 12 9 4-9 2-3 14-3-13-10-3 10-3z"/><path d="M2104 1376l3 8 7 2-7 3-2 9-3-9-7-2 7-3z"/></g>
<g fill="#dcdfec"><path d="M2149 1268l1 4 3 1-3 1-1 4-1-4-3-1 3-1z"/><path d="M2212 1406l2 5 4 2-4 1-2 5-1-5-4-1 4-2z"/><path d="M2286 1318l2 4 3 2-3 1-2 5-1-5-3-1 3-2z"/></g>
<use href="#panel"/><use href="#panel" transform="translate(-54,41)"/>
<path d="M2225 1322l-9 13-8 8" fill="none" stroke="#a3a8b6" stroke-width="3"/>
<polygon points="2206,1320 2218,1311 2232,1331 2222,1339" fill="#fff" transform="translate(-2,4)"/>
<polygon points="2212,1345 2226,1335 2234,1348 2222,1356" fill="#fff"/>
<path d="M2207 1336l14-7 6 4-16 10z" fill="#9a9fae"/>
<ellipse cx="2202" cy="1315" rx="13" ry="9" transform="rotate(-38 2202 1315)" fill="#a9aebb"/>
<path d="M2194 1305l3 8" stroke="#8b90a0" stroke-width="2.500"/>
<path d="M2258 1424a34 34 0 0 1 -20 -8l44-48a34 34 0 0 1 10 23c0 18-15 33-34 33z" fill="#fff"/>
<ellipse cx="2259" cy="1391" rx="34" ry="34" fill="none" stroke="#a3a8b6" stroke-width="3.500"/>
<path d="M2236 1415l46-48" stroke="#a3a8b6" stroke-width="3.500"/>
</svg>
</div></body></html>
